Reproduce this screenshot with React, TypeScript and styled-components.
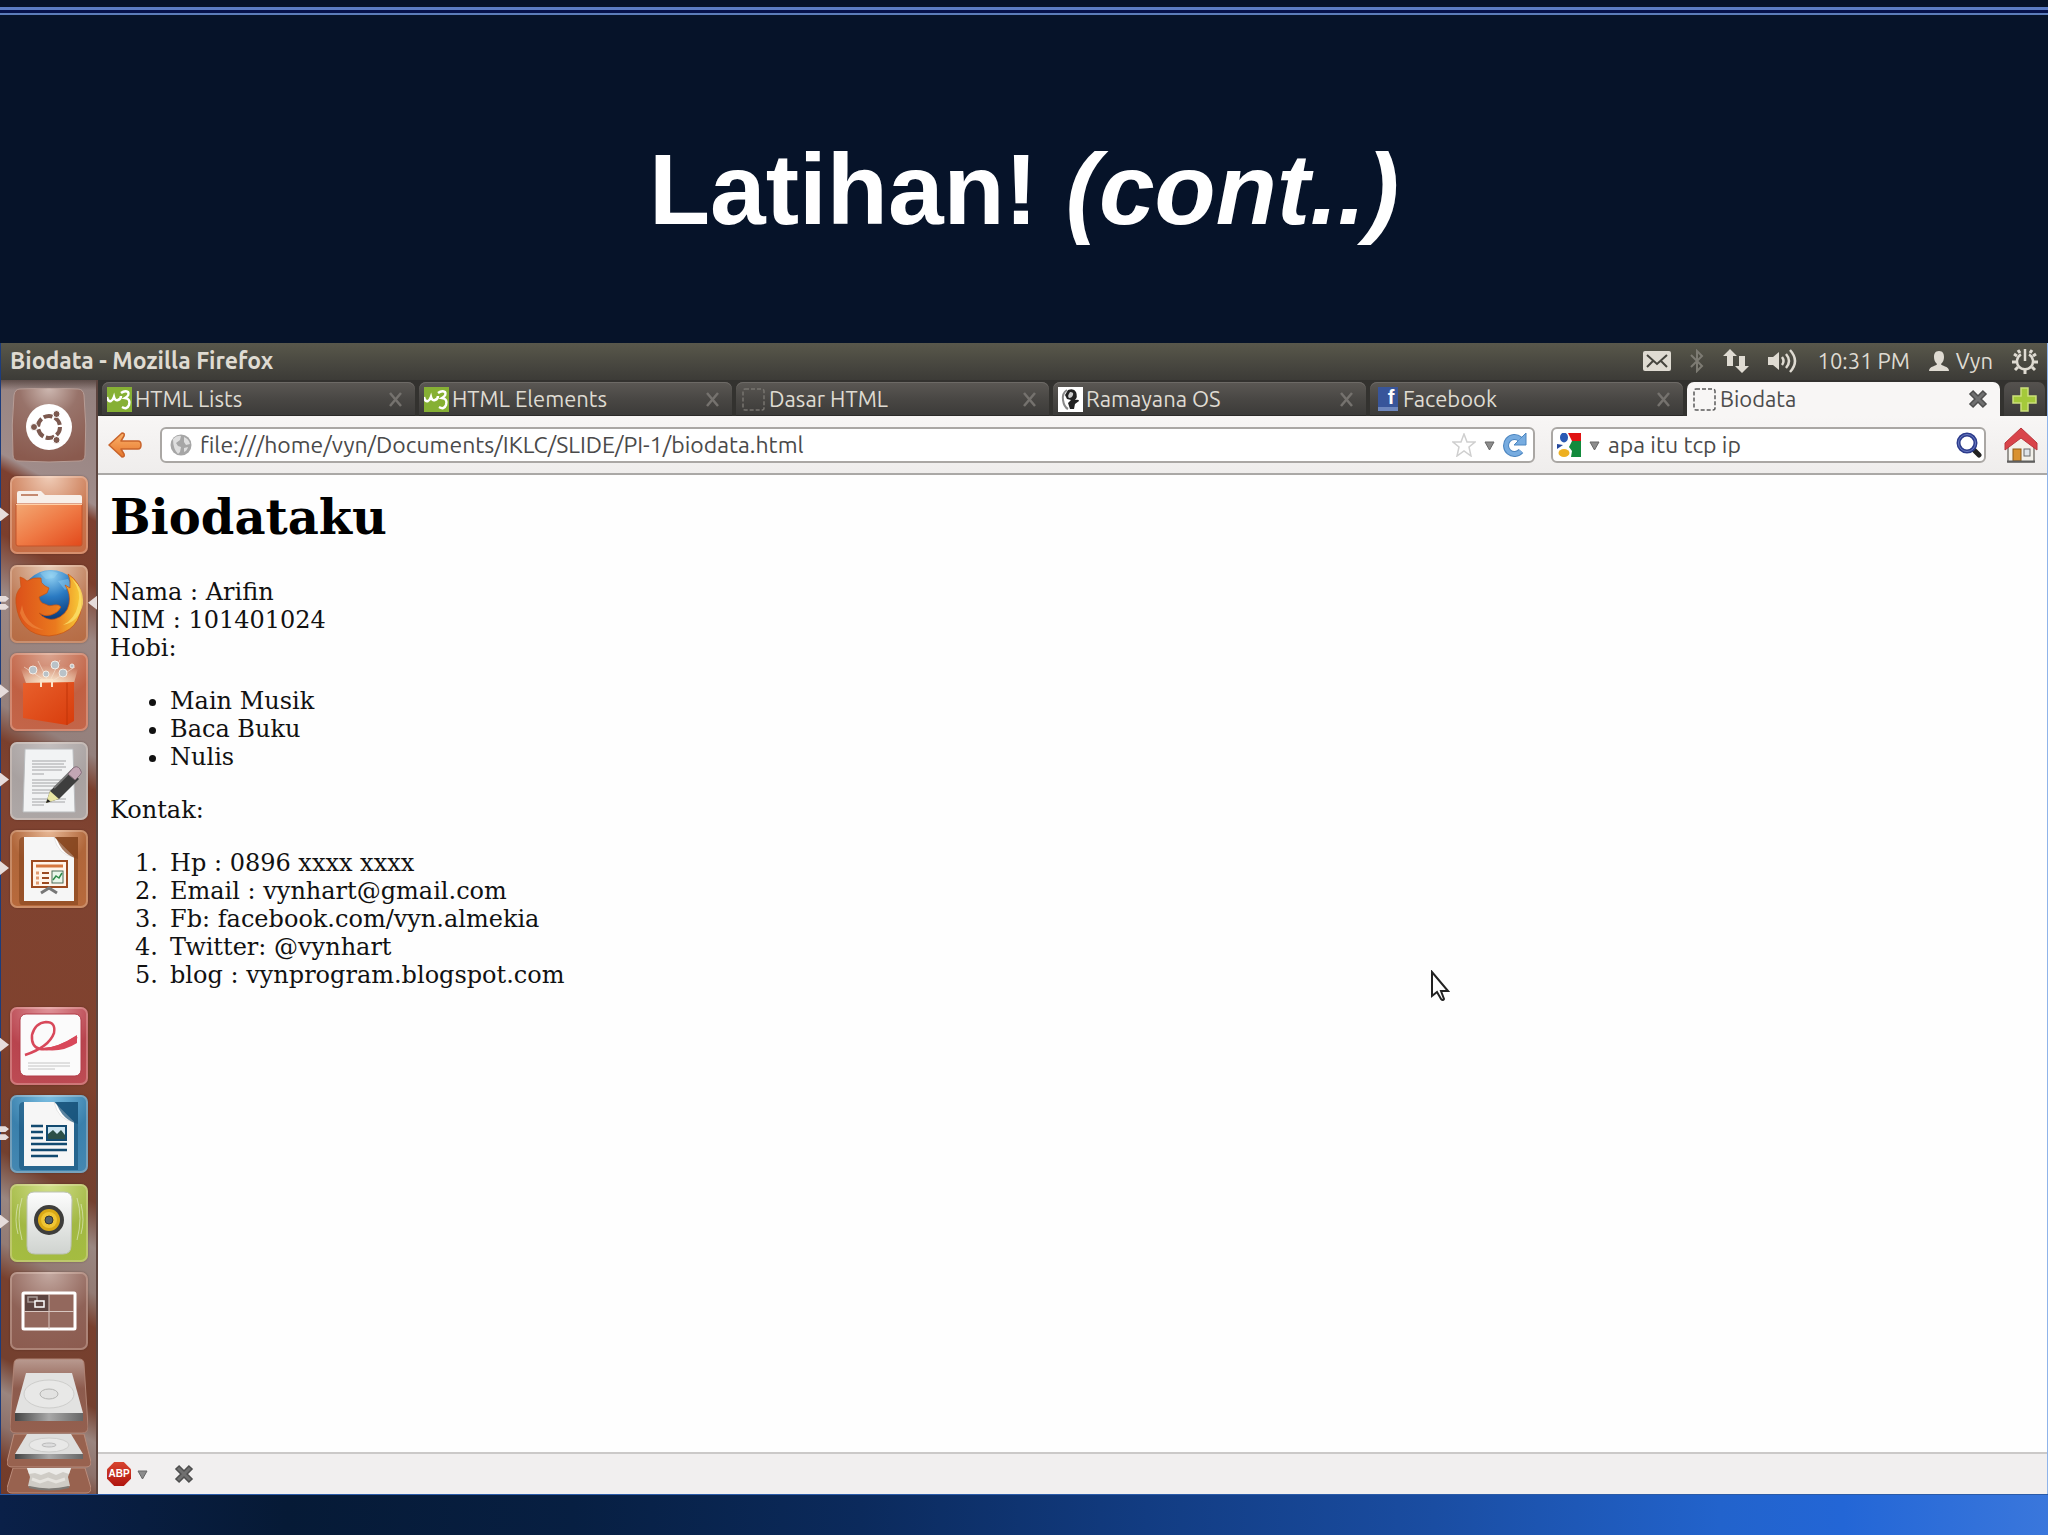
import React from "react";
import styled, { createGlobalStyle, css } from "styled-components";

const UI_FONT = `Ubuntu, "Noto Sans", "Open Sans", sans-serif`;

const GlobalStyle = createGlobalStyle`
  *, *::before, *::after { box-sizing: border-box; }
  body { margin: 0; background: #061329; }
  button { font: inherit; color: inherit; background: none; border: 0; padding: 0; margin: 0; cursor: pointer; }
  svg { display: block; flex: none; }
`;

/* ---------- Slide ---------- */

const Slide = styled.div`
  display: flex;
  flex-direction: column;
  min-height: 100vh;
  background: #061329;
`;

const SlideRules = styled.div`
  height: 8px;
  margin-top: 7px;
  background: linear-gradient(#5c7dc4 0 3px, #06124a 3px 6px, #5c7dba 6px 8px);
`;

const SlideTitle = styled.h1`
  margin: 0;
  padding: 116px 24px 96px;
  text-align: center;
  color: #fff;
  font: bold 100px/116px "Liberation Sans", Arial, sans-serif;
`;

const SlideFooter = styled.footer`
  height: 41px;
  border-top: 1px solid #2b5ba8;
  background: linear-gradient(90deg, #0a2048 0%, #061a36 14%, #071f42 28%, #0b2a5c 42%, #123c82 56%, #1a4da2 70%, #2263cc 84%, #2366d6 90%, #3a77dc 100%);
`;

/* ---------- Desktop ---------- */

const Desktop = styled.div`
  flex: 1;
  display: flex;
  flex-direction: column;
  padding: 0 1px;
  background: linear-gradient(90deg, #1c3c7c, #8fb4ea);
`;

const TopPanel = styled.header`
  display: flex;
  align-items: center;
  justify-content: space-between;
  height: 37px;
  padding: 0 9px 2px 9px;
  background: linear-gradient(#59584b, #4a4941 50%, #3c3b37);
  color: #dfdbd2;
  font: 22px/28px ${UI_FONT};
`;

const WindowTitle = styled.strong`
  font-weight: 700;
  font-size: 23px;
`;

const Indicators = styled.div`
  display: flex;
  align-items: center;
  gap: 19px;
`;

const Indicator = styled.button`
  display: flex;
  align-items: center;
  gap: 7px;
`;

const Workspace = styled.div`
  flex: 1;
  display: flex;
`;

/* ---------- Launcher ---------- */

const LauncherBar = styled.nav`
  display: flex;
  flex-direction: column;
  width: 97px;
  padding: 8px 9px 0;
  border-right: 2px solid #5d453f;
  background:
    linear-gradient(rgba(40, 25, 20, 0.5), transparent 10px),
    linear-gradient(209deg, #93807d 0, #a08c8a 110px, #7d4030 124px, #7b3e2c 180px, #9c8783 230px, #94807c 330px, #7a3f2d 360px,
      #7f4331 400px, #80422e 620px, #7a3f2c 640px, #73402f 720px, #9a8781 760px, #937b74 800px, #78402e 830px, #74402f 900px,
      #9a857f 930px, #8d716a 960px, #753d2b 990px, #6f3a2a 1040px);
`;

const LauncherApps = styled.div`
  flex: 1;
  display: flex;
  flex-direction: column;
  justify-content: space-between;
`;

const Tile = styled.button<{ $bg?: string; $flat?: boolean }>`
  position: relative;
  display: block;
  width: 78px;
  height: 78px;
  border-radius: 7px;
  background: ${(p) => p.$bg ?? "transparent"};
  ${(p) => !p.$flat && css`box-shadow: inset 0 0 0 2px rgba(255, 235, 220, 0.28), 0 0 2px rgba(40, 10, 0, 0.4);`}
`;

const EmptySlot = styled.div`
  height: 78px;
`;

const Pip = styled.span<{ $side?: "left" | "right"; $double?: boolean }>`
  position: absolute;
  top: 31px;
  ${(p) => (p.$side === "right" ? "right: -9px;" : "left: -10px;")}
  width: 9px;
  height: 14px;
  background: #e6dcdb;
  clip-path: ${(p) =>
    p.$side === "right"
      ? "polygon(100% 0, 100% 100%, 0 50%)"
      : p.$double
        ? "polygon(0 0, 60% 0, 100% 20%, 60% 42%, 0 42%, 0 58%, 60% 58%, 100% 80%, 60% 100%, 0 100%)"
        : "polygon(0 0, 0 100%, 100% 50%)"};
`;

const FoldedStack = styled.div`
  display: flex;
  flex-direction: column;
  align-items: center;
  margin: 8px -9px 0;
`;

/* ---------- Firefox ---------- */

const Browser = styled.main`
  flex: 1;
  min-width: 0;
  display: flex;
  flex-direction: column;
  background: #fff;
`;

const TabStrip = styled.div`
  display: flex;
  gap: 4px;
  height: 36px;
  padding: 2px 2px 0 4px;
  background: #33322f;
  font: 22px/28px ${UI_FONT};
`;

const Tab = styled.div<{ $active?: boolean }>`
  flex: 1;
  min-width: 0;
  display: flex;
  align-items: center;
  padding: 0 12px 0 5px;
  border-radius: 7px 7px 0 0;
  ${(p) =>
    p.$active
      ? css`background: #f8f6f5; color: #4c4c4c;`
      : css`
          background: linear-gradient(#5b5854, #494744 50%, #3b3a38);
          box-shadow: inset 0 1px 0 #6d6a66, inset 0 -1px 0 #2b2a28;
          color: #dfdbd2;
        `}
`;

const TabLabel = styled.button`
  flex: 1;
  min-width: 0;
  display: flex;
  align-items: center;
  gap: 3px;
  white-space: nowrap;
`;

const TabIcon = styled.span`
  display: flex;
  justify-content: center;
  min-width: 25px;
`;

const NewTab = styled.button`
  display: grid;
  place-items: center;
  width: 41px;
  border-radius: 7px 7px 0 0;
  background: linear-gradient(#55524f, #3b3a38);
`;

const FacebookMark = styled.span`
  width: 20px;
  height: 24px;
  border-bottom: 4px solid #6d86bd;
  background: #38559a;
  color: #fff;
  text-align: right;
  padding-right: 3px;
  font: bold 20px/20px "Liberation Sans", Arial, sans-serif;
`;

const NavBar = styled.div`
  display: flex;
  align-items: center;
  gap: 16px;
  height: 59px;
  padding: 0 9px 0 10px;
  border-bottom: 2px solid #aaa8a6;
  background: linear-gradient(#f8f6f5, #efedec);
`;

const Field = styled.div<{ $grow?: boolean }>`
  display: flex;
  align-items: center;
  gap: 8px;
  height: 36px;
  border: 2px solid #aaa7a4;
  border-radius: 6px;
  background: #fff;
  ${(p) => (p.$grow ? "flex: 1; padding: 0 6px 0 8px;" : "width: 435px; padding: 0 2px 0 4px;")}
`;

const TextBox = styled.input`
  flex: 1;
  min-width: 0;
  padding: 0;
  border: 0;
  outline: 0;
  background: none;
  color: #4a4a4a;
  font: 23px/28px ${UI_FONT};
`;

const IconButton = styled.button`
  display: grid;
  place-items: center;
`;

const BackButton = styled(IconButton)`
  padding-right: 2px;
`;

const HomeButton = styled(IconButton)`
  padding-left: 2px;
`;

const Document = styled.article`
  position: relative;
  flex: 1;
  padding: 14px 12px 0;
  background: #fefefe;
  color: #111;
  font: 24px/28px "DejaVu Serif", serif;
`;

const DocHeading = styled.h2`
  margin: 0 0 33px;
  color: #000;
  font-size: 48px;
  line-height: 56px;
`;

const Paragraph = styled.p`
  margin: 0 0 25px;
`;

const Bullets = styled.ul`
  margin: 0 0 25px;
  padding-left: 60px;
`;

const Numbers = styled.ol`
  margin: 0;
  padding-left: 60px;

  li::marker {
    content: counter(list-item) ".\\2002";
  }
`;

const Pointer = styled.svg`
  position: absolute;
  left: 1332px;
  top: 495px;
`;

const StatusBar = styled.footer`
  display: flex;
  align-items: center;
  height: 42px;
  padding: 0 9px;
  border-top: 2px solid #cbc9c8;
  background: #f1efef;
`;

const AdBlock = styled.button`
  display: flex;
  align-items: center;
  gap: 6px;
  margin-right: 26px;
`;

const AdBlockSign = styled.span`
  display: grid;
  place-items: center;
  width: 24px;
  height: 24px;
  background: linear-gradient(#d8442f, #b0150f);
  clip-path: polygon(30% 0, 70% 0, 100% 30%, 100% 70%, 70% 100%, 30% 100%, 0 70%, 0 30%);
  color: #fff;
  font: bold 10px/12px "Liberation Sans", Arial, sans-serif;
`;

/* ---------- Small icons ---------- */

const MailIcon = () => (
  <svg width="28" height="20" viewBox="0 0 28 20">
    <rect width="28" height="20" rx="2" fill="#dfdbd2" />
    <path d="M4 4l10 9 10-9M4 16l6-6M24 16l-6-6" fill="none" stroke="#45443d" strokeWidth="2" />
  </svg>
);
const BluetoothIcon = () => (
  <svg width="14" height="24" viewBox="0 0 14 24">
    <path d="M1 6l11 11-5 5V2l5 5L1 18" fill="none" stroke="#7d7b73" strokeWidth="2" />
  </svg>
);
const NetworkIcon = () => (
  <svg width="26" height="24" viewBox="0 0 26 24" fill="#dfdbd2">
    <path d="M7 0l7 7h-4v10H4V7H0z M19 24l-7-7h4V7h6v10h4z" />
  </svg>
);
const VolumeIcon = () => (
  <svg width="31" height="24" viewBox="0 0 31 24">
    <path d="M0 8h5l6-5v18l-6-5H0z" fill="#dfdbd2" />
    <path d="M14 8q3 4 0 8M18 5q6 7 0 14M22 1q10 11 0 22" fill="none" stroke="#dfdbd2" strokeWidth="2.500" />
  </svg>
);
const PersonIcon = () => (
  <svg width="20" height="20" viewBox="0 0 20 20" fill="#dfdbd2">
    <path d="M10 0c4 0 5 3 5 6 0 3-1 5-3 7 0 2 8 2 8 7H0c0-5 8-5 8-7-2-2-3-4-3-7 0-3 1-6 5-6z" />
  </svg>
);
const PowerGearIcon = () => (
  <svg width="26" height="26" viewBox="0 0 26 26" fill="none" stroke="#dfdbd2">
    <path d="M9 6.400a8 8 0 1 0 8 0" strokeWidth="2.500" />
    <path d="M13 1v12" strokeWidth="2.500" />
    <path d="M5 8L2 6M4 14H0M6 19l-3 3M13 22v4M20 19l3 3M22 14h4M21 8l3-2M8 5L6 2M18 5l2-3" strokeWidth="3" />
  </svg>
);
const W3Icon = () => (
  <svg width="25" height="25" viewBox="0 0 25 25">
    <rect width="25" height="25" fill="#86b034" />
    <path d="M0 10q1 5 4 4 2-1 3-4 1 4 4 3 3-1 3-4" fill="none" stroke="#fff" strokeWidth="2.500" />
    <path d="M14 6q4-3 7-1 2 3-3 6 6 1 4 7-2 5-7 2" fill="none" stroke="#fff" strokeWidth="2.500" />
  </svg>
);
const BlankPageIcon = ({ dim }: { dim?: boolean }) => (
  <svg width="23" height="23" viewBox="0 0 23 23">
    <rect x="1" y="1" width="21" height="21" rx="2" fill="none" stroke={dim ? "#77746f" : "#5a5a5a"} strokeWidth="1.500" strokeDasharray="4 2" />
  </svg>
);
const RamayanaIcon = () => (
  <svg width="25" height="25" viewBox="0 0 25 25">
    <rect width="25" height="25" fill="#fff" />
    <path d="M10 3q6-2 8 2 2 5-1 8 4-1 4 1l-4 3-1 5h-4l-2-6 3-3-4-1-2-4z" fill="#222" />
    <path d="M12 5q4 0 3 3t-4 3q-2-2 1-6z" fill="#ccc" />
    <path d="M9 3Q4 6 5 13t5 9" fill="none" stroke="#888" strokeWidth="2" />
  </svg>
);
const ThinCross = () => (
  <svg width="15" height="15" viewBox="0 0 15 15">
    <path d="M2 1l11 13M13 1L2 14" stroke="#75726e" strokeWidth="2.500" />
  </svg>
);
const BoldCross = () => (
  <svg width="20" height="20" viewBox="0 0 20 20">
    <path d="M3 3l14 14M17 3L3 17" stroke="#4e4e4e" strokeWidth="6" />
    <path d="M4 4l12 12M16 4L4 16" stroke="#707070" strokeWidth="3" />
  </svg>
);
const PlusIcon = () => (
  <svg width="25" height="25" viewBox="0 0 25 25">
    <path d="M9 1h7v8h8v7h-8v8H9v-8H1V9h8z" fill="#a4c93a" stroke="#cbe07c" strokeWidth="1.500" />
  </svg>
);
const BackIcon = () => (
  <svg width="34" height="28" viewBox="0 0 34 28">
    <defs>
      <linearGradient id="back" x2="0" y2="1">
        <stop stopColor="#fbb36b" />
        <stop offset="1" stopColor="#e6762c" />
      </linearGradient>
    </defs>
    <path d="M14 2q3 0 2 3l-3 5h17q3 0 3 4t-3 4H13l3 5q1 3-2 3L1 14z" fill="url(#back)" stroke="#c8632a" strokeWidth="1.500" strokeLinejoin="round" />
  </svg>
);
const GlobeIcon = () => (
  <svg width="22" height="22" viewBox="0 0 22 22">
    <circle cx="11" cy="11" r="10.500" fill="#a6a6a6" />
    <path d="M3 5q4-4 8-3l-1 4-4 3 2 3 3 1-1 5-2 2q-5-5-5-15zM14 3q5 2 6 7l-4 1-2-3z M14 14l4-1q-1 4-4 5z" fill="#dedede" />
  </svg>
);
const StarIcon = () => (
  <svg width="24" height="24" viewBox="0 0 24 24">
    <path d="M12 1l3 8h8l-6 5 2 9-7-5-7 5 2-9-6-5h8z" fill="#fff" stroke="#cfcfcf" strokeWidth="1.500" />
  </svg>
);
const CaretIcon = () => (
  <svg width="11" height="14" viewBox="0 0 11 14">
    <path d="M1 4h9L5.500 12z" fill="#8c8c8c" stroke="#666" />
  </svg>
);
const ReloadIcon = () => (
  <svg width="24" height="24" viewBox="0 0 24 24">
    <path d="M18 18a8.500 8.500 0 1 1-1-12" fill="none" stroke="#4d86c0" strokeWidth="6" />
    <path d="M23 0v12H11z" fill="#77ace0" stroke="#4d86c0" />
    <path d="M18 18a8.500 8.500 0 1 1-1-12" fill="none" stroke="#77ace0" strokeWidth="4" />
  </svg>
);
const GoogleIcon = () => (
  <svg width="24" height="24" viewBox="0 0 24 24">
    <path d="M11 0h13v8H15z" fill="#e01212" />
    <path d="M15 8h9v16H14l1-6-3-4z" fill="#128a3c" />
    <ellipse cx="7" cy="4.500" rx="4" ry="5" fill="#2a5ab4" />
    <path d="M0 11l6 1-6 4z" fill="#24489c" />
    <ellipse cx="7" cy="20" rx="5.500" ry="4" fill="#eeb020" />
  </svg>
);
const SearchIcon = () => (
  <svg width="26" height="26" viewBox="0 0 26 26">
    <path d="M18 18l5 5" stroke="#222" strokeWidth="5" strokeLinecap="round" />
    <circle cx="11" cy="11" r="8.500" fill="#fff" stroke="#2c3c8c" strokeWidth="4" />
    <circle cx="11" cy="11" r="8.500" fill="none" stroke="#6c7cc4" strokeWidth="1" />
  </svg>
);
const HomeIcon = () => (
  <svg width="34" height="36" viewBox="0 0 34 36">
    <path d="M4 17L17 6l13 11v18H4z" fill="#f3f1ea" stroke="#7d7a74" strokeWidth="1.500" />
    <path d="M17 1L33 16v7L17 11 1 23v-7z" fill="#d9444a" stroke="#b8363c" />
    <rect x="9" y="22" width="8" height="12" fill="#d9912f" stroke="#8c5a18" />
    <rect x="20" y="22" width="6" height="7" fill="#dfe5ea" stroke="#6b6b6b" />
    <path d="M3 34.500h28" stroke="#5f5f5f" strokeWidth="2" />
  </svg>
);

/* ---------- Launcher artwork ---------- */

const Art = ({ children, h = 78 }: { children: React.ReactNode; h?: number }) => (
  <svg width="78" height={h} viewBox={`0 0 78 ${h}`} aria-hidden="true">{children}</svg>
);

const DashArt = () => (
  <Art>
    <defs>
      <radialGradient id="dash" cx=".5" cy="0" r="1">
        <stop stopColor="#cdb8b1" />
        <stop offset=".4" stopColor="#98736a" />
        <stop offset="1" stopColor="#8a5a4e" />
      </radialGradient>
    </defs>
    <path d="M10 1Q39-1 68 1q5 0 6 6 3 30 1 60 0 6-6 6-30 2-60 0-6 0-6-6Q1 37 4 7 5 1 10 1z" fill="url(#dash)" stroke="#b79d96" />
    <circle cx="39" cy="39" r="23" fill="#fff" />
    <circle cx="39" cy="39" r="11" fill="none" stroke="#7c594f" strokeWidth="4" strokeDasharray="9 2.500" />
    <g fill="#7c594f" stroke="#fff">
      <circle cx="24" cy="39" r="3.500" />
      <circle cx="46.500" cy="26" r="3.500" />
      <circle cx="46.500" cy="52" r="3.500" />
    </g>
  </Art>
);
const FolderArt = () => (
  <Art>
    <defs>
      <linearGradient id="folder" x2="1" y2="1">
        <stop stopColor="#f3a873" />
        <stop offset=".5" stopColor="#ef7a45" />
        <stop offset="1" stopColor="#e2491b" />
      </linearGradient>
    </defs>
    <path d="M7 17q0-2 2-2h22l4 4h35q2 0 2 2v10H7z" fill="#f7efe9" />
    <path d="M11 19h17" stroke="#c48a70" strokeWidth="2" />
    <path d="M6 28h66v40q0 2-2 2H8q-2 0-2-2z" fill="url(#folder)" stroke="#c4542a" />
    <path d="M6 28.500h66" stroke="#ffd0a8" />
  </Art>
);
const FirefoxArt = () => (
  <Art>
    <defs>
      <radialGradient id="ocean" cx=".5" cy=".1" r=".7">
        <stop stopColor="#8fd0f2" />
        <stop offset=".5" stopColor="#2a7ac2" />
        <stop offset="1" stopColor="#0d3d7c" />
      </radialGradient>
      <linearGradient id="fox" x2="1">
        <stop stopColor="#dc501a" />
        <stop offset=".6" stopColor="#ea7a1e" />
        <stop offset="1" stopColor="#f8cf3a" />
      </linearGradient>
    </defs>
    <circle cx="41" cy="35" r="30" fill="url(#ocean)" />
    <path d="M30 8q9-4 18 0l-4 5-8 1zM48 16l10-2 4 7-7 4z" fill="#9ed6f2" opacity=".4" />
    <path d="M10 12q4 1 7 4 6-4 14-3-1 5 4 8l4 2-2 5-8 4q1 6 6 7 4 3 9 1 5-1 7 2-3 6-10 8-7 2-12-2 7 8 16 6 12-4 14-15 2-10-4-19l5 3q1-8-2-14 13 8 14 25 0 34-33 37Q9 70 6 38q-1-10 5-16z" fill="url(#fox)" stroke="#c9500f" strokeWidth=".7" />
    <path d="M62 14q10 12 6 26-3 14-15 20 16-3 20-21 1-16-11-25z" fill="#fbe06a" opacity=".8" />
    <path d="M12 40q3 19 22 25-18-1-24-17z" fill="#f08c42" opacity=".6" />
  </Art>
);
const SoftwareArt = () => (
  <Art>
    <defs>
      <radialGradient id="glow" cx=".5" cy="1" r=".8">
        <stop stopColor="#fff3d8" />
        <stop offset="1" stopColor="#fff3d8" stopOpacity="0" />
      </radialGradient>
      <linearGradient id="bag" x2="1" y2="1">
        <stop stopColor="#e8602c" />
        <stop offset="1" stopColor="#d83c0c" />
      </linearGradient>
    </defs>
    <path d="M8 8h62l-6 22H16z" fill="url(#glow)" />
    <path d="M39 30L14 14M39 30L28 8M39 30L50 7M39 30l26-16" stroke="#f6e3d4" opacity=".6" />
    <g fill="#b9c2c8" stroke="#f2eee8">
      <circle cx="23" cy="17" r="4" />
      <circle cx="45" cy="12" r="4" />
      <circle cx="53" cy="20" r="4" />
      <circle cx="36" cy="21" r="3" />
      <circle cx="62" cy="13" r="2" />
    </g>
    <path d="M13 30l51-1v39l-7 4-44-7z" fill="url(#bag)" />
    <path d="M57 30v42" stroke="#c03408" />
    <path d="M31 34v-7h11v7" fill="none" stroke="#fbe3c8" strokeWidth="2" />
  </Art>
);
const EditorArt = () => (
  <Art>
    <path d="M15 7h48l2 63H13z" fill="#f2f3f4" stroke="#b9bbbd" />
    <path d="M22 19h34M22 22h32M22 25h34M22 28h30M22 32h12M22 38h34M22 41h33M22 44h30M22 48h34M22 51h20M22 57h34M22 60h33M22 63h12" stroke="#a3a4a6" />
    <path d="M36 61l4-12 21-20 8 8-20 20z" fill="#3e3e3e" />
    <path d="M44 46l18-18" stroke="#777" strokeWidth="2" />
    <path d="M36 61l4-12 9 8z" fill="#e9e6a4" />
    <path d="M36 61l1.500-4 3 2.500z" fill="#222" />
    <path d="M58 32l5-6q4-3 7 1t0 6l-5 5z" fill="#c3a6b4" stroke="#86707c" />
  </Art>
);
const FoldedPage = ({ shade }: { shade: string }) => (
  <>
    <path d="M9 70V12q0-5 5-5h54v68H12q-3 0-3-5z" fill={shade} opacity=".6" />
    <path d="M14 7h30l20 20v44H14z" fill="#f6f6f6" />
    <path d="M44 7q4 18 20 20z" fill="#fff" stroke="#cfcfcf" strokeWidth=".5" />
    <path d="M46 7h22v22q-16-4-22-22z" fill={shade} opacity=".7" />
  </>
);
const ImpressArt = () => (
  <Art>
    <FoldedPage shade="#83431d" />
    <rect x="22" y="31" width="35" height="26" fill="#fff4ea" stroke="#9c4a20" strokeWidth="2" />
    <path d="M26 36h27" stroke="#d6763d" strokeWidth="3" />
    <path d="M26 43h3M26 48h3M26 53h3" stroke="#e09a70" strokeWidth="3" />
    <path d="M32 43h7M32 48h7M32 53h7" stroke="#9c4a20" strokeWidth="2" />
    <rect x="42" y="41" width="11" height="12" fill="#eaf6ea" stroke="#4c6b56" />
    <path d="M43 50l3-4 3 2 3-5" fill="none" stroke="#2d8a48" strokeWidth="1.500" />
    <path d="M31 63l8-5 8 5" fill="none" stroke="#777" strokeWidth="3" />
  </Art>
);
const PdfArt = () => (
  <Art>
    <rect x="10" y="7" width="61" height="62" rx="6" fill="#fbfbfb" stroke="#b23c48" />
    <path d="M15 48q24-8 29-22 2-11-8-11-11 1-14 13-1 12 8 14 14 2 37-12" fill="none" stroke="#d8485a" strokeWidth="2.500" />
    <path d="M30 41q16 1 37-13v8Q50 47 30 42z" fill="#d8485a" />
    <path d="M18 56h42M18 59h42M18 62h27" stroke="#c4c4c4" />
  </Art>
);
const WriterArt = () => (
  <Art>
    <FoldedPage shade="#155078" />
    <rect x="37" y="31" width="19" height="14" fill="#cfe6f2" stroke="#124a70" strokeWidth="2" />
    <path d="M38 44v-5l5-4 4 4 4-4 4 5v4z" fill="#2b4f48" />
    <path d="M21 31h12M21 37h12M21 43h12M21 49h36M21 55h36M21 61h27" stroke="#124a70" strokeWidth="2.500" />
  </Art>
);
const SpeakerArt = () => (
  <Art>
    <defs>
      <linearGradient id="case" x2="0" y2="1">
        <stop stopColor="#fdfdfd" />
        <stop offset="1" stopColor="#cfd3cf" />
      </linearGradient>
    </defs>
    <path d="M12 14q-6 20 0 42M8 20q-4 16 0 30M67 14q6 20 0 42M71 20q4 16 0 30" fill="none" stroke="#dde8bd" opacity=".7" />
    <path d="M24 8h30q8 0 8 8l-1 46q0 8-8 8H25q-8 0-8-8V16q0-8 7-8z" fill="url(#case)" stroke="#bcc2b4" />
    <circle cx="39" cy="36" r="15" fill="#3e3e3c" />
    <circle cx="39" cy="36" r="11" fill="#dba915" />
    <circle cx="39" cy="36" r="8" fill="#f0c534" />
    <circle cx="39" cy="36" r="4" fill="#53606a" stroke="#333" />
  </Art>
);
const WorkspacesArt = () => (
  <Art>
    <rect x="13" y="21" width="52" height="36" rx="1" fill="#93685d" stroke="#fff" strokeWidth="3" />
    <rect x="15" y="23" width="24" height="16" fill="#5c4440" />
    <path d="M39 22v35M14 39.500h50" stroke="#d8c6c0" />
    <rect x="18" y="25" width="9" height="5" fill="none" stroke="#a89a96" strokeWidth="1.500" />
    <rect x="25" y="29" width="9" height="6" fill="#5c4440" stroke="#fff" strokeWidth="1.500" />
  </Art>
);
const DriveArt = () => (
  <Art h={76}>
    <defs>
      <linearGradient id="glass" x2="0" y2="1">
        <stop stopColor="#b99a90" />
        <stop offset=".4" stopColor="#8d5b4d" />
        <stop offset="1" stopColor="#94604f" />
      </linearGradient>
      <linearGradient id="steel" x2="1">
        <stop stopColor="#444" />
        <stop offset=".5" stopColor="#a8a8a8" />
        <stop offset="1" stopColor="#666" />
      </linearGradient>
    </defs>
    <path d="M9 1h60q5 0 5 5l4 63q0 6-6 6H6q-6 0-6-6L4 6q0-5 5-5z" fill="url(#glass)" stroke="#b08475" />
    <path d="M16 15h46l11 40H5z" fill="#e2e2e1" />
    <path d="M5 55h68v8H5z" fill="url(#steel)" />
    <ellipse cx="39" cy="36" rx="25" ry="14" fill="#e8e8e7" stroke="#cdcdcb" />
    <ellipse cx="39" cy="36" rx="9" ry="5" fill="#e2e2e1" stroke="#b4b4b2" />
  </Art>
);
const FlatDriveArt = () => (
  <svg width="84" height="34" viewBox="0 0 84 34">
    <path d="M7 0h70l7 28q0 5-5 5H5q-5 0-5-5z" fill="#98624f" stroke="#bb8d7c" />
    <path d="M20 0h44l12 20H8z" fill="#dededd" />
    <path d="M8 20h68v5H8z" fill="url(#steel)" />
    <ellipse cx="42" cy="11" rx="20" ry="7" fill="#e8e8e7" stroke="#cdcdcb" />
    <ellipse cx="42" cy="11" rx="7" ry="2" fill="#ddd" stroke="#bbb" />
  </svg>
);
const TrashArt = () => (
  <svg width="84" height="26" viewBox="0 0 84 26">
    <path d="M6 0h72l6 20q0 5-5 5H5q-5 0-5-5z" fill="#98624f" stroke="#bb8d7c" />
    <path d="M20 0h44l-3 9 2 9q-8 3-21 3t-21-3l2-9z" fill="#cfccc6" />
    <path d="M20 0h44l-2 6-6-2-7 3-7-3-8 3-6-2-6 1z" fill="#ecebe8" />
    <path d="M25 11l8 3 8-3 8 3 9-3" fill="none" stroke="#e6e4df" strokeWidth="3" />
    <path d="M22 19q20 5 40 0" fill="none" stroke="#7b7874" strokeWidth="2" />
  </svg>
);

type App = {
  name: string;
  art?: React.ReactNode;
  bg?: string;
  flat?: boolean;
  running?: boolean;
  several?: boolean;
  focused?: boolean;
};

const apps: App[] = [
  { name: "Dash home", art: <DashArt />, flat: true },
  { name: "Home Folder", art: <FolderArt />, running: true, bg: "radial-gradient(circle at 50% 0, #f0cdb8, #c9764f 55%, #c66a42)" },
  { name: "Firefox Web Browser", art: <FirefoxArt />, several: true, focused: true, bg: "radial-gradient(circle at 50% 0, #e8cdb8, #bd7a56 55%, #b56a42)" },
  { name: "Ubuntu Software Center", art: <SoftwareArt />, running: true, bg: "radial-gradient(circle at 50% 0, #dba590, #c06043 55%, #c4664a)" },
  { name: "Text Editor", art: <EditorArt />, running: true, bg: "radial-gradient(circle at 50% 0, #c4bfbf, #a8a1a0 55%, #aea8a7)" },
  { name: "LibreOffice Impress", art: <ImpressArt />, running: true, bg: "radial-gradient(circle at 50% 0, #e8b896, #b0663a 45%, #b86a3c)" },
  { name: "" },
  { name: "Document Viewer", art: <PdfArt />, running: true, bg: "radial-gradient(circle at 50% 0, #e0959a, #b8444e 55%, #bd4c54)" },
  { name: "LibreOffice Writer", art: <WriterArt />, several: true, bg: "radial-gradient(circle at 50% 0, #7cc0e4, #3a80ac 50%, #4588b2)" },
  { name: "Sound Juicer", art: <SpeakerArt />, running: true, bg: "radial-gradient(circle at 50% 0, #d3e08c, #a2b843 55%, #a5bd40)" },
  { name: "Workspace Switcher", art: <WorkspacesArt />, bg: "radial-gradient(circle at 50% 0, #c4aaa2, #8f6257 55%, #8c5b4f)" },
];

const Launcher = () => (
  <LauncherBar aria-label="Launcher">
    <LauncherApps>
      {apps.map((app, i) =>
        app.art ? (
          <Tile key={i} $bg={app.bg} $flat={app.flat} aria-label={app.name}>
            {app.art}
            {(app.running || app.several) && <Pip $double={app.several} />}
            {app.focused && <Pip $side="right" />}
          </Tile>
        ) : (
          <EmptySlot key={i} />
        )
      )}
    </LauncherApps>
    <FoldedStack>
      <IconButton aria-label="Drive"><DriveArt /></IconButton>
      <IconButton aria-label="Second drive"><FlatDriveArt /></IconButton>
      <IconButton aria-label="Trash"><TrashArt /></IconButton>
    </FoldedStack>
  </LauncherBar>
);

const tabs = [
  { title: "HTML Lists", icon: <W3Icon /> },
  { title: "HTML Elements", icon: <W3Icon /> },
  { title: "Dasar HTML", icon: <BlankPageIcon dim /> },
  { title: "Ramayana OS", icon: <RamayanaIcon /> },
  { title: "Facebook", icon: <FacebookMark>f</FacebookMark> },
  { title: "Biodata", icon: <BlankPageIcon />, active: true },
];

const hobbies = ["Main Musik", "Baca Buku", "Nulis"];
const contacts = [
  "Hp : 0896 xxxx xxxx",
  "Email : vynhart@gmail.com",
  "Fb: facebook.com/vyn.almekia",
  "Twitter: @vynhart",
  "blog : vynprogram.blogspot.com",
];

export default function App() {
  return (
    <Slide>
      <GlobalStyle />
      <SlideRules />
      <SlideTitle>
        Latihan! <em>(cont..)</em>
      </SlideTitle>
      <Desktop>
        <TopPanel>
          <WindowTitle>Biodata - Mozilla Firefox</WindowTitle>
          <Indicators>
            <Indicator aria-label="Messages"><MailIcon /></Indicator>
            <Indicator aria-label="Bluetooth"><BluetoothIcon /></Indicator>
            <Indicator aria-label="Network"><NetworkIcon /></Indicator>
            <Indicator aria-label="Volume"><VolumeIcon /></Indicator>
            <Indicator>10:31 PM</Indicator>
            <Indicator><PersonIcon />Vyn</Indicator>
            <Indicator aria-label="Session"><PowerGearIcon /></Indicator>
          </Indicators>
        </TopPanel>
        <Workspace>
          <Launcher />
          <Browser>
            <TabStrip>
              {tabs.map((tab) => (
                <Tab key={tab.title} $active={tab.active}>
                  <TabLabel><TabIcon>{tab.icon}</TabIcon>{tab.title}</TabLabel>
                  <IconButton aria-label={`Close ${tab.title}`}>{tab.active ? <BoldCross /> : <ThinCross />}</IconButton>
                </Tab>
              ))}
              <NewTab aria-label="New tab"><PlusIcon /></NewTab>
            </TabStrip>
            <NavBar>
              <BackButton aria-label="Back"><BackIcon /></BackButton>
              <Field $grow>
                <GlobeIcon />
                <TextBox aria-label="Address" defaultValue="file:///home/vyn/Documents/IKLC/SLIDE/PI-1/biodata.html" />
                <IconButton aria-label="Bookmark"><StarIcon /></IconButton>
                <IconButton aria-label="History"><CaretIcon /></IconButton>
                <IconButton aria-label="Reload"><ReloadIcon /></IconButton>
              </Field>
              <Field>
                <GoogleIcon />
                <IconButton aria-label="Search engine"><CaretIcon /></IconButton>
                <TextBox aria-label="Search" defaultValue="apa itu tcp ip" />
                <IconButton aria-label="Search the web"><SearchIcon /></IconButton>
              </Field>
              <HomeButton aria-label="Home"><HomeIcon /></HomeButton>
            </NavBar>
            <Document>
              <DocHeading>Biodataku</DocHeading>
              <Paragraph>
                Nama : Arifin<br />
                NIM : 101401024<br />
                Hobi:
              </Paragraph>
              <Bullets>
                {hobbies.map((hobby) => <li key={hobby}>{hobby}</li>)}
              </Bullets>
              <Paragraph>Kontak:</Paragraph>
              <Numbers>
                {contacts.map((contact) => <li key={contact}>{contact}</li>)}
              </Numbers>
              <Pointer width="20" height="32" viewBox="0 0 20 32" aria-hidden="true">
                <path d="M2 2v24l5-4 4 7q2 2 3 0l-3-8h7z" fill="#fff" stroke="#222" strokeWidth="2" />
              </Pointer>
            </Document>
            <StatusBar>
              <AdBlock><AdBlockSign>ABP</AdBlockSign><CaretIcon /></AdBlock>
              <IconButton aria-label="Close add-on bar"><BoldCross /></IconButton>
            </StatusBar>
          </Browser>
        </Workspace>
      </Desktop>
      <SlideFooter />
    </Slide>
  );
}
